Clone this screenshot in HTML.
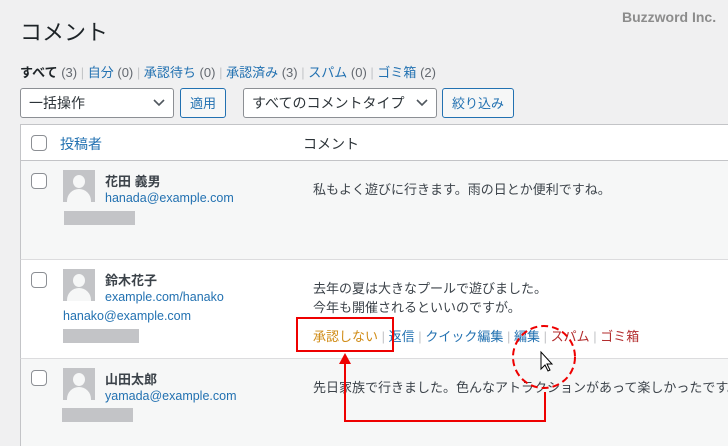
<!DOCTYPE html>
<html><head><meta charset="utf-8"><style>
*{margin:0;padding:0;box-sizing:border-box}
body{width:728px;height:446px;overflow:hidden;background:#f0f0f1;position:relative;font-family:"Liberation Sans","Noto Sans CJK JP",sans-serif;font-size:13px;color:#3c434a}
.a{position:absolute;white-space:nowrap}
.l{color:#2271b1}
.g{color:#646970}
.e{font-size:12.5px}
.cb{position:absolute;width:16px;height:16px;border:1px solid #8c8f94;border-radius:4px;background:#fff}
.av{position:absolute;width:32px;height:32px;background:#c3c4c7;overflow:hidden}
.av:before{content:"";position:absolute;left:10px;top:5px;width:12px;height:13px;border-radius:50%;background:#f6f7f7}
.av:after{content:"";position:absolute;left:4px;top:19px;width:24px;height:20px;border-radius:12px 12px 0 0;background:#f6f7f7}
.ip{position:absolute;width:71px;height:14px;background:#c3c4c7}
.sel{position:absolute;height:30px;border:1px solid #8c8f94;border-radius:3px;background:#fff;font-size:14px;padding:4px 8px;color:#2c3338}
.sel svg{position:absolute;right:8px;top:10px}
.btn{position:absolute;height:30px;border:1px solid #2271b1;border-radius:3px;background:#f6f7f7;color:#2271b1;font-size:13px;padding:4px 9px}
.row{position:absolute;left:20px;width:708px;border-top:1px solid #dcdcde}
</style></head><body>
<div class="a" style="left:20px;top:15px;font-size:22px;color:#1d2327">コメント</div>
<div class="a" style="left:622px;top:9px;font-size:14px;font-weight:bold;color:#8c8c8c">Buzzword Inc.</div>
<div class="a" style="left:20px;top:62px;font-size:13px"><b style="color:#1d2327">すべて</b> <span class="g">(3)</span> <span style="color:#c3c4c7">|</span> <span class="l">自分</span> <span class="g">(0)</span> <span style="color:#c3c4c7">|</span> <span class="l">承認待ち</span> <span class="g">(0)</span> <span style="color:#c3c4c7">|</span> <span class="l">承認済み</span> <span class="g">(3)</span> <span style="color:#c3c4c7">|</span> <span class="l">スパム</span> <span class="g">(0)</span> <span style="color:#c3c4c7">|</span> <span class="l">ゴミ箱</span> <span class="g">(2)</span></div>
<div class="sel" style="left:20px;top:88px;width:154px">一括操作<svg width="12" height="8"><path d="M1 1l5 5 5-5" stroke="#50575e" stroke-width="1.6" fill="none"/></svg></div>
<div class="btn" style="left:180px;top:88px;width:46px">適用</div>
<div class="sel" style="left:243px;top:88px;width:194px">すべてのコメントタイプ<svg width="12" height="8"><path d="M1 1l5 5 5-5" stroke="#50575e" stroke-width="1.6" fill="none"/></svg></div>
<div class="btn" style="left:442px;top:88px;width:72px">絞り込み</div>

<div class="row" style="top:124px;height:36px;background:#fff;border-top:1px solid #c3c4c7;border-left:1px solid #c3c4c7"></div>
<div class="row" style="top:160px;height:99px;background:#f6f7f7;border-left:1px solid #c3c4c7;border-top:1px solid #c3c4c7"></div>
<div class="row" style="top:259px;height:99px;background:#fff;border-left:1px solid #c3c4c7"></div>
<div class="row" style="top:358px;height:88px;background:#f6f7f7;border-left:1px solid #c3c4c7"></div>

<div class="cb" style="left:31px;top:135px"></div>
<div class="a l" style="left:60px;top:134px;font-size:14px">投稿者</div>
<div class="a" style="left:303px;top:134px;font-size:14px;color:#2c3338">コメント</div>

<div class="cb" style="left:31px;top:173px"></div>
<div class="av" style="left:63px;top:170px"></div>
<div class="a" style="left:105px;top:171px;font-weight:bold">花田 義男</div>
<div class="a l e" style="left:105px;top:191px">hanada@example.com</div>
<div class="ip" style="left:64px;top:211px"></div>
<div class="a" style="left:313px;top:179px">私もよく遊びに行きます。雨の日とか便利ですね。</div>

<div class="cb" style="left:31px;top:272px"></div>
<div class="av" style="left:63px;top:269px"></div>
<div class="a" style="left:105px;top:270px;font-weight:bold">鈴木花子</div>
<div class="a l e" style="left:105px;top:290px">example.com/hanako</div>
<div class="a l e" style="left:63px;top:309px">hanako@example.com</div>
<div class="ip" style="left:63px;top:329px;width:76px"></div>
<div class="a" style="left:313px;top:278px">去年の夏は大きなプールで遊びました。</div>
<div class="a" style="left:313px;top:297px">今年も開催されるといいのですが。</div>
<div class="a" style="left:313px;top:326px"><span style="color:#d08c17">承認しない</span> <span style="color:#c3c4c7">|</span> <span class="l">返信</span> <span style="color:#c3c4c7">|</span> <span class="l">クイック編集</span> <span style="color:#c3c4c7">|</span> <span class="l">編集</span> <span style="color:#c3c4c7">|</span> <span style="color:#b32d2e">スパム</span> <span style="color:#c3c4c7">|</span> <span style="color:#b32d2e">ゴミ箱</span></div>

<div class="cb" style="left:31px;top:370px"></div>
<div class="av" style="left:63px;top:368px"></div>
<div class="a" style="left:105px;top:369px;font-weight:bold">山田太郎</div>
<div class="a l e" style="left:105px;top:389px">yamada@example.com</div>
<div class="ip" style="left:62px;top:408px"></div>
<div class="a" style="left:313px;top:377px">先日家族で行きました。色んなアトラクションがあって楽しかったです。</div>

<svg class="a" style="left:0;top:0" width="728" height="446">
<rect x="297" y="318" width="96" height="33" fill="none" stroke="#e00" stroke-width="2"/>
<circle cx="544" cy="357" r="31" fill="none" stroke="#e00" stroke-width="2" stroke-dasharray="7,4"/>
<path d="M545 392V421H345V363" fill="none" stroke="#e00" stroke-width="2"/>
<path d="M339 364L345 353L351 364Z" fill="#e00"/>
<path d="M541 352v17l4-4 3 6 2-1-3-6h5z" fill="#fff" stroke="#000" stroke-width="1"/>
</svg>
</body></html>
